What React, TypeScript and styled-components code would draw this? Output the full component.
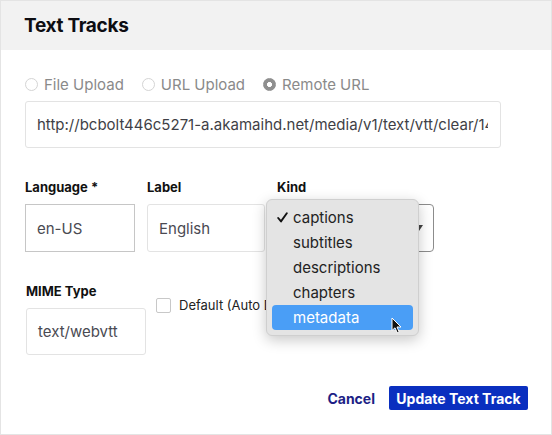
import React from "react";
import styled, { createGlobalStyle } from "styled-components";

const GlobalStyle = createGlobalStyle`
  html, body {
    margin: 0;
    padding: 0;
    background: #ffffff;
  }
  body {
    font-family: Inter, "Noto Sans", Arial, sans-serif;
  }
  * {
    box-sizing: border-box;
  }
`;

const kinds = ["captions", "subtitles", "descriptions", "chapters", "metadata"];

const App = () => {
  return (
    <Dialog>
      <GlobalStyle />
      <Header>
        <Title>Text Tracks</Title>
      </Header>
      <Body>
        <RadioRow>
          <RadioOption>
            <Radio />
            File Upload
          </RadioOption>
          <RadioOption>
            <Radio />
            URL Upload
          </RadioOption>
          <RadioOption>
            <Radio checked />
            Remote URL
          </RadioOption>
        </RadioRow>
        <UrlField>
          <UrlText>
            http://bcbolt446c5271-a.akamaihd.net/media/v1/text/vtt/clear/1486918812345/en-US.vtt
          </UrlText>
        </UrlField>

        <FieldRow>
          <Field $width={110}>
            <FieldLabel>Language *</FieldLabel>
            <TextBox $strong>en-US</TextBox>
          </Field>
          <Field $width={118}>
            <FieldLabel>Label</FieldLabel>
            <TextBox>English</TextBox>
          </Field>
          <Field $width={157}>
            <FieldLabel>Kind</FieldLabel>
            <Select>
              captions
              <SelectArrow />
            </Select>
            <Menu>
              {kinds.map((k, i) => (
                <MenuItem key={k} $active={k === "metadata"}>
                  {i === 0 && (
                    <Check width="11" height="11" viewBox="0 0 11 11">
                      <path
                        d="M1.2 6 L4 9.4 L9.8 1.2"
                        fill="none"
                        stroke="#111"
                        strokeWidth="1.9"
                        strokeLinecap="round"
                        strokeLinejoin="round"
                      />
                    </Check>
                  )}
                  {k}
                </MenuItem>
              ))}
              <Pointer width="12" height="17" viewBox="0 0 12 17">
                <path
                  d="M1 1 L1 13.5 L4 10.8 L6.2 15.8 L8.2 14.9 L6 10 L10 10 Z"
                  fill="#111"
                  stroke="#fff"
                  strokeWidth="1"
                  strokeLinejoin="round"
                />
              </Pointer>
            </Menu>
          </Field>
        </FieldRow>

        <MimeRow>
          <Field $width={120}>
            <FieldLabel>MIME Type</FieldLabel>
            <TextBox $tall={47}>text/webvtt</TextBox>
          </Field>
          <CheckOption>
            <CheckBox />
            Default (Auto Display)
          </CheckOption>
        </MimeRow>
      </Body>
      <Footer>
        <CancelButton>Cancel</CancelButton>
        <PrimaryButton>Update Text Track</PrimaryButton>
      </Footer>
    </Dialog>
  );
};

const Dialog = styled.div`
  position: relative;
  width: 552px;
  height: 435px;
  border: 1px solid #e4e4e4;
  display: flex;
  flex-direction: column;
  overflow: hidden;
`;

const Header = styled.div`
  height: 49px;
  background-color: #f2f2f2;
  padding: 0 23px;
  display: flex;
  align-items: center;
`;

const Title = styled.h2`
  margin: 0;
  font-size: 19px;
  font-weight: 700;
  color: #0d0d12;
  letter-spacing: -0.3px;
`;

const Body = styled.div`
  padding: 24px 23px 0 24px;
  display: flex;
  flex-direction: column;
`;

const RadioRow = styled.div`
  display: flex;
  gap: 18px;
  height: 20px;
  align-items: center;
`;

const RadioOption = styled.label`
  display: flex;
  align-items: center;
  gap: 6px;
  font-size: 15px;
  color: #8a8a8a;
`;

const Radio = styled.span<{ checked?: boolean }>`
  width: 13px;
  height: 13px;
  border-radius: 50%;
  border: 1px solid ${(p) => (p.checked ? "#8f8f8f" : "#d4d4d4")};
  background: ${(p) =>
    p.checked
      ? "radial-gradient(circle, #fff 0 2.2px, #8f8f8f 2.8px)"
      : "#fff"};
`;

const UrlField = styled.div`
  margin-top: 7px;
  width: 476px;
  height: 47px;
  border: 1px solid #e3e3e3;
  border-radius: 3px;
  padding: 0 12px 0 11px;
  display: flex;
  align-items: center;
`;

const UrlText = styled.span`
  flex: 1;
  font-size: 15px;
  color: #3f3f46;
  white-space: nowrap;
  overflow: hidden;
`;

const FieldRow = styled.div`
  margin-top: 31px;
  display: flex;
  gap: 12px;
`;

const Field = styled.div<{ $width: number }>`
  position: relative;
  width: ${(p) => p.$width}px;
  display: flex;
  flex-direction: column;
`;

const FieldLabel = styled.div`
  height: 16px;
  font-size: 13px;
  font-weight: 700;
  color: #111;
  line-height: 16px;
  white-space: nowrap;
`;

const TextBox = styled.div<{ $strong?: boolean; $tall?: number }>`
  margin-top: 9px;
  height: ${(p) => p.$tall ?? 48}px;
  border: 1px solid ${(p) => (p.$strong ? "#c6c6c6" : "#e3e3e3")};
  border-radius: ${(p) => (p.$strong ? "0" : "3px")};
  padding: 0 11px;
  display: flex;
  align-items: center;
  font-size: 15px;
  color: #4a4a52;
`;

const Select = styled.div`
  margin-top: 9px;
  height: 48px;
  border: 1px solid #8c8c8c;
  border-radius: 4px;
  padding: 0 12px;
  display: flex;
  align-items: center;
  font-size: 15px;
  color: #333;
  position: relative;
`;

const SelectArrow = styled.span`
  position: absolute;
  right: 10px;
  top: 20px;
  width: 0;
  height: 0;
  border-left: 4px solid transparent;
  border-right: 4px solid transparent;
  border-top: 6px solid #444;
`;

const Menu = styled.div`
  position: absolute;
  left: -11px;
  top: 20px;
  width: 153px;
  padding: 5px 5px 5px;
  background-color: #e4e4e4;
  border: 1px solid #cfcfcf;
  border-radius: 6px;
  box-shadow: 0 4px 14px rgba(0, 0, 0, 0.22);
  display: flex;
  flex-direction: column;
  z-index: 2;
`;

const MenuItem = styled.div<{ $active?: boolean }>`
  position: relative;
  height: 25px;
  padding-left: 21px;
  display: flex;
  align-items: center;
  border-radius: 4px;
  font-size: 15px;
  color: ${(p) => (p.$active ? "#ffffff" : "#222")};
  background-color: ${(p) => (p.$active ? "#4a9ef6" : "transparent")};
`;

const Check = styled.svg`
  position: absolute;
  left: 5px;
  top: 7px;
`;

const Pointer = styled.svg`
  position: absolute;
  left: 124px;
  top: 117px;
`;

const MimeRow = styled.div`
  margin-top: 31px;
  display: flex;
  gap: 10px;
  padding-left: 1px;
`;

const CheckOption = styled.label`
  margin-top: 14px;
  height: 16px;
  display: flex;
  align-items: center;
  gap: 8px;
  font-size: 13px;
  color: #222;
  white-space: nowrap;
`;

const CheckBox = styled.span`
  width: 15px;
  height: 15px;
  border: 1px solid #c8c8c8;
  border-radius: 2px;
  background: #fff;
`;

const Footer = styled.div`
  margin-top: auto;
  padding: 0 23px 24px 0;
  display: flex;
  justify-content: flex-end;
  align-items: center;
  gap: 14px;
`;

const CancelButton = styled.button`
  border: none;
  background: none;
  padding: 0;
  font-family: inherit;
  font-size: 14px;
  font-weight: 700;
  color: #1d1f86;
  cursor: pointer;
`;

const PrimaryButton = styled.button`
  height: 24px;
  width: 139px;
  border: none;
  border-radius: 2px;
  background-color: #0a2fbf;
  font-family: inherit;
  font-size: 14px;
  font-weight: 700;
  color: #ffffff;
  padding: 0;
  cursor: pointer;
`;

export default App;
